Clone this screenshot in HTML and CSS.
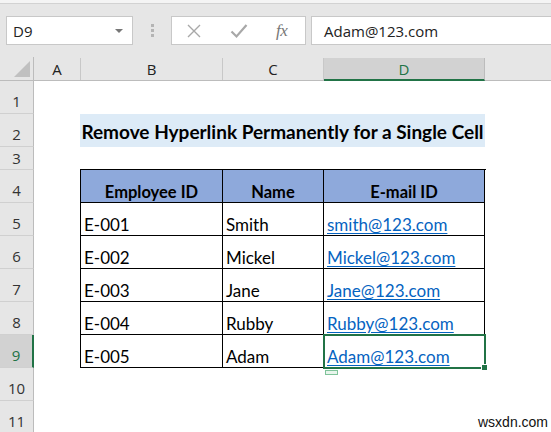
FILE: index.html
```html
<!DOCTYPE html>
<html>
<head>
<meta charset="utf-8">
<link rel="stylesheet" href="styles.css">
</head>
<body>
<div class="toolbar">
  <div class="edge"></div>
  <div class="fbar">
    <div class="namebox"><span>D9</span><span class="caret"></span></div>
    <div class="dots"><i></i><i></i><i></i></div>
    <div class="fxbtns">
      <svg class="ico-x" width="16" height="16" viewBox="0 0 16 16"><path d="M2 2 L14 14 M14 2 L2 14" stroke="#a8a8a8" stroke-width="1.4" fill="none"/></svg>
      <svg class="ico-ok" width="18" height="16" viewBox="0 0 18 16"><path d="M1.5 8.5 L6.5 13.5 L16.5 2" stroke="#a8a8a8" stroke-width="2.2" fill="none"/></svg>
      <span class="fx">fx</span>
    </div>
    <div class="finput">Adam@123.com</div>
  </div>
</div>
<div class="sheet">
  <div class="rowheads">
    <div class="corner"><span class="tri"></span></div>
    <div class="rh">1</div>
    <div class="rh">2</div>
    <div class="rh short">3</div>
    <div class="rh">4</div>
    <div class="rh">5</div>
    <div class="rh">6</div>
    <div class="rh">7</div>
    <div class="rh">8</div>
    <div class="rh sel">9</div>
    <div class="rh">10</div>
    <div class="rh">11</div>
  </div>
  <div class="main">
    <div class="colheads">
      <div class="ch ca">A</div>
      <div class="ch cb">B</div>
      <div class="ch cc">C</div>
      <div class="ch cd sel">D</div>
      <div class="ch ce"></div>
    </div>
    <div class="body">
      <div class="r1"></div>
      <div class="title">Remove Hyperlink Permanently for a Single Cell</div>
      <div class="r3"></div>
      <div class="tbl">
        <div class="th">Employee ID</div><div class="th">Name</div><div class="th">E-mail ID</div>
        <div class="td">E-001</div><div class="td">Smith</div><div class="td"><a>smith@123.com</a></div>
        <div class="td">E-002</div><div class="td">Mickel</div><div class="td"><a>Mickel@123.com</a></div>
        <div class="td">E-003</div><div class="td">Jane</div><div class="td"><a>Jane@123.com</a></div>
        <div class="td">E-004</div><div class="td">Rubby</div><div class="td"><a>Rubby@123.com</a></div>
        <div class="td">E-005</div><div class="td">Adam</div><div class="td"><a>Adam@123.com</a></div>
        <div class="selbox"><span class="handle"></span></div>
        <div class="qa"></div>
      </div>
      <div class="wm">wsxdn.com</div>
    </div>
  </div>
</div>
</body>
</html>
```
FILE: styles.css
```css
html, body { margin: 0; padding: 0; }
body { width: 551px; height: 432px; overflow: hidden; background: #fff; font-family: "Open Sans", "Noto Sans", sans-serif; }

.toolbar { height: 57px; background: #e6e6e6; display: flex; flex-direction: column; }
.edge { height: 3px; background: #f4f4f4; border-bottom: 1px solid #d2d2d2; }
.fbar { margin-top: 12px; height: 29px; display: flex; padding-left: 6px; }
.namebox { width: 127px; height: 29px; box-sizing: border-box; background: #fff; border: 1px solid #c8c8c8; display: flex; align-items: center; justify-content: space-between; padding: 0 9px 0 6px; font-size: 15px; color: #222; }
.caret { width: 0; height: 0; border-left: 4px solid transparent; border-right: 4px solid transparent; border-top: 4px solid #777; }
.dots { width: 38px; display: flex; flex-direction: column; align-items: center; justify-content: center; gap: 2px; }
.dots i { display: block; width: 3px; height: 3px; background: #b4b4b4; }
.fxbtns { width: 135px; height: 29px; box-sizing: border-box; background: #fff; border: 1px solid #c8c8c8; display: flex; align-items: center; padding-left: 14px; }
.ico-x { margin-right: 28px; }
.ico-ok { margin-right: 28px; }
.fx { font-family: "Liberation Serif", serif; font-style: italic; font-size: 17px; color: #777; letter-spacing: -0.5px; }
.finput { flex: 1; margin-left: 5px; height: 29px; box-sizing: border-box; background: #fff; border: 1px solid #c8c8c8; border-right: none; display: flex; align-items: center; padding-left: 12px; font-size: 15px; color: #222; }

.sheet { display: flex; }
.rowheads { width: 34px; flex: none; background: #e6e6e6; }
.corner { height: 24px; box-sizing: border-box; border-right: 1px solid #bcbcbc; border-bottom: 1px solid #bcbcbc; position: relative; }
.tri { position: absolute; right: 3px; bottom: 3px; width: 0; height: 0; border-left: 16px solid transparent; border-bottom: 16px solid #c0c0c0; }
.rh { height: 33px; box-sizing: border-box; border-right: 1px solid #bcbcbc; border-bottom: 1px solid #d0d0d0; display: flex; align-items: center; justify-content: center; padding-top: 8px; font-size: 15px; color: #333; }
.rh.short { height: 23px; padding-top: 0; }
.rh.sel { background: #d2d2d2; color: #217346; border-right: 2px solid #217346; }

.main { flex: 1; }
.colheads { display: flex; height: 24px; background: #e6e6e6; box-sizing: border-box; border-bottom: 1px solid #bcbcbc; }
.ch { box-sizing: border-box; border-right: 1px solid #c8c8c8; display: flex; align-items: center; justify-content: center; font-size: 15px; color: #222; margin-top: 1px; }
.ca { width: 47px; }
.cb { width: 142px; }
.cc { width: 101px; }
.cd { width: 161px; }
.ce { flex: 1; border-right: none; }
.ch.sel { background: #d2d2d2; color: #217346; border-bottom: 2px solid #217346; border-right: 1px solid #bcbcbc; margin-bottom: -1px; }

.body { position: relative; font-family: "Lato", sans-serif; color: #000; }
.r1 { height: 33px; }
.r3 { height: 22px; }
.title { margin-left: 46px; width: 405px; height: 33px; background: #ddebf7; font-weight: bold; font-size: 19px; display: flex; align-items: flex-end; justify-content: center; padding-bottom: 4px; box-sizing: border-box; white-space: nowrap; }
.tbl { margin-left: 46px; width: 405px; display: grid; grid-template-columns: 142px 101px 161px; grid-auto-rows: 33px; border-left: 1px solid #000; border-top: 1px solid #000; position: relative; }
.th, .td { box-sizing: border-box; border-right: 1px solid #000; border-bottom: 1px solid #000; display: flex; align-items: flex-end; font-size: 17px; padding-bottom: 0; line-height: 20px; white-space: nowrap; }
.th { background: #8ea9db; font-weight: bold; font-size: 16.5px; justify-content: center; padding-bottom: 0; }
.td { padding-left: 3px; }
.td a { color: #0563c1; text-decoration: underline; text-underline-offset: 2px; }
.selbox { position: absolute; left: 242px; top: 164px; width: 163px; height: 35px; box-sizing: border-box; border: 2px solid #217346; }
.handle { position: absolute; right: -4px; bottom: -4px; width: 5px; height: 5px; background: #217346; border: 1px solid #fff; }
.qa { position: absolute; left: 244px; top: 200px; width: 11px; height: 3px; border: 1px solid #7fc39a; background: #e8f5ec; }
.wm { position: absolute; left: 444px; top: 333px; font-family: "Liberation Sans", Arial, sans-serif; font-size: 14px; color: #111; }
```
